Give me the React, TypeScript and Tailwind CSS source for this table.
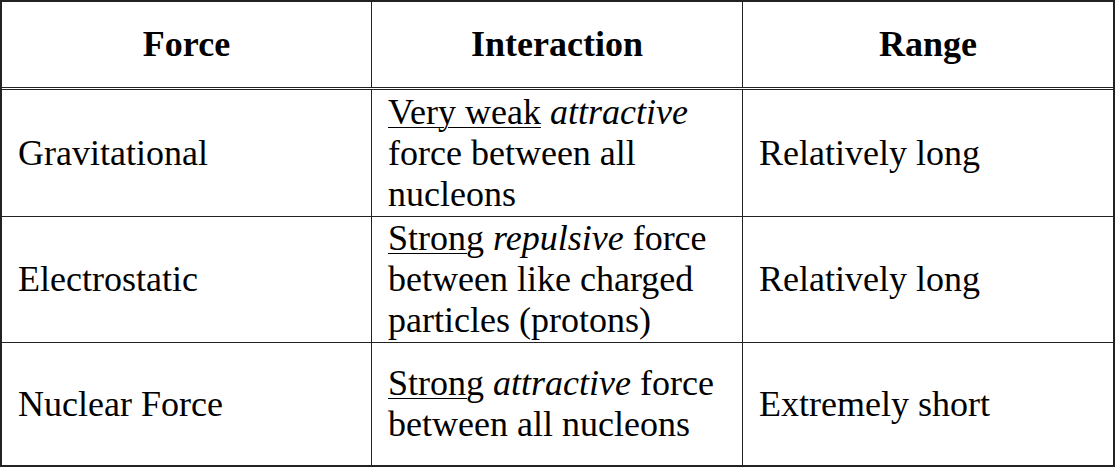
import React from "react";

const cellBase = "flex items-center pl-4 pr-2";

export default function App() {
  return (
    <div className="w-[1115px] h-[467px] bg-white font-['Liberation_Serif','Times_New_Roman',serif] text-[36px] leading-[41px] text-black">
      <div className="w-[1115px] h-[467px] border-2 border-[#222] flex flex-col">
        {/* Header */}
        <div className="flex h-[88px] border-b-[3px] border-double border-[#222] font-bold">
          <div className="w-[370px] border-r border-[#222] flex items-center justify-center">Force</div>
          <div className="w-[371px] border-r border-[#222] flex items-center justify-center">Interaction</div>
          <div className="flex-1 flex items-center justify-center">Range</div>
        </div>
        {/* Row 1 */}
        <div className="flex h-[127px] border-b border-[#222]">
          <div className={`w-[370px] border-r border-[#222] ${cellBase}`}>Gravitational</div>
          <div className={`w-[371px] border-r border-[#222] ${cellBase}`}>
            <p>
              <span className="underline decoration-1 underline-offset-[3px]">Very weak</span> <i>attractive</i> force between all nucleons
            </p>
          </div>
          <div className={`flex-1 ${cellBase}`}>Relatively long</div>
        </div>
        {/* Row 2 */}
        <div className="flex h-[126px] border-b border-[#222]">
          <div className={`w-[370px] border-r border-[#222] ${cellBase}`}>Electrostatic</div>
          <div className={`w-[371px] border-r border-[#222] ${cellBase}`}>
            <p>
              <span className="underline decoration-1 underline-offset-[3px]">Strong</span> <i>repulsive</i> force between like charged particles (protons)
            </p>
          </div>
          <div className={`flex-1 ${cellBase}`}>Relatively long</div>
        </div>
        {/* Row 3 */}
        <div className="flex flex-1">
          <div className={`w-[370px] border-r border-[#222] ${cellBase}`}>Nuclear Force</div>
          <div className={`w-[371px] border-r border-[#222] ${cellBase}`}>
            <p>
              <span className="underline decoration-1 underline-offset-[3px]">Strong</span> <i>attractive</i> force between all nucleons
            </p>
          </div>
          <div className={`flex-1 ${cellBase}`}>Extremely short</div>
        </div>
      </div>
    </div>
  );
}
